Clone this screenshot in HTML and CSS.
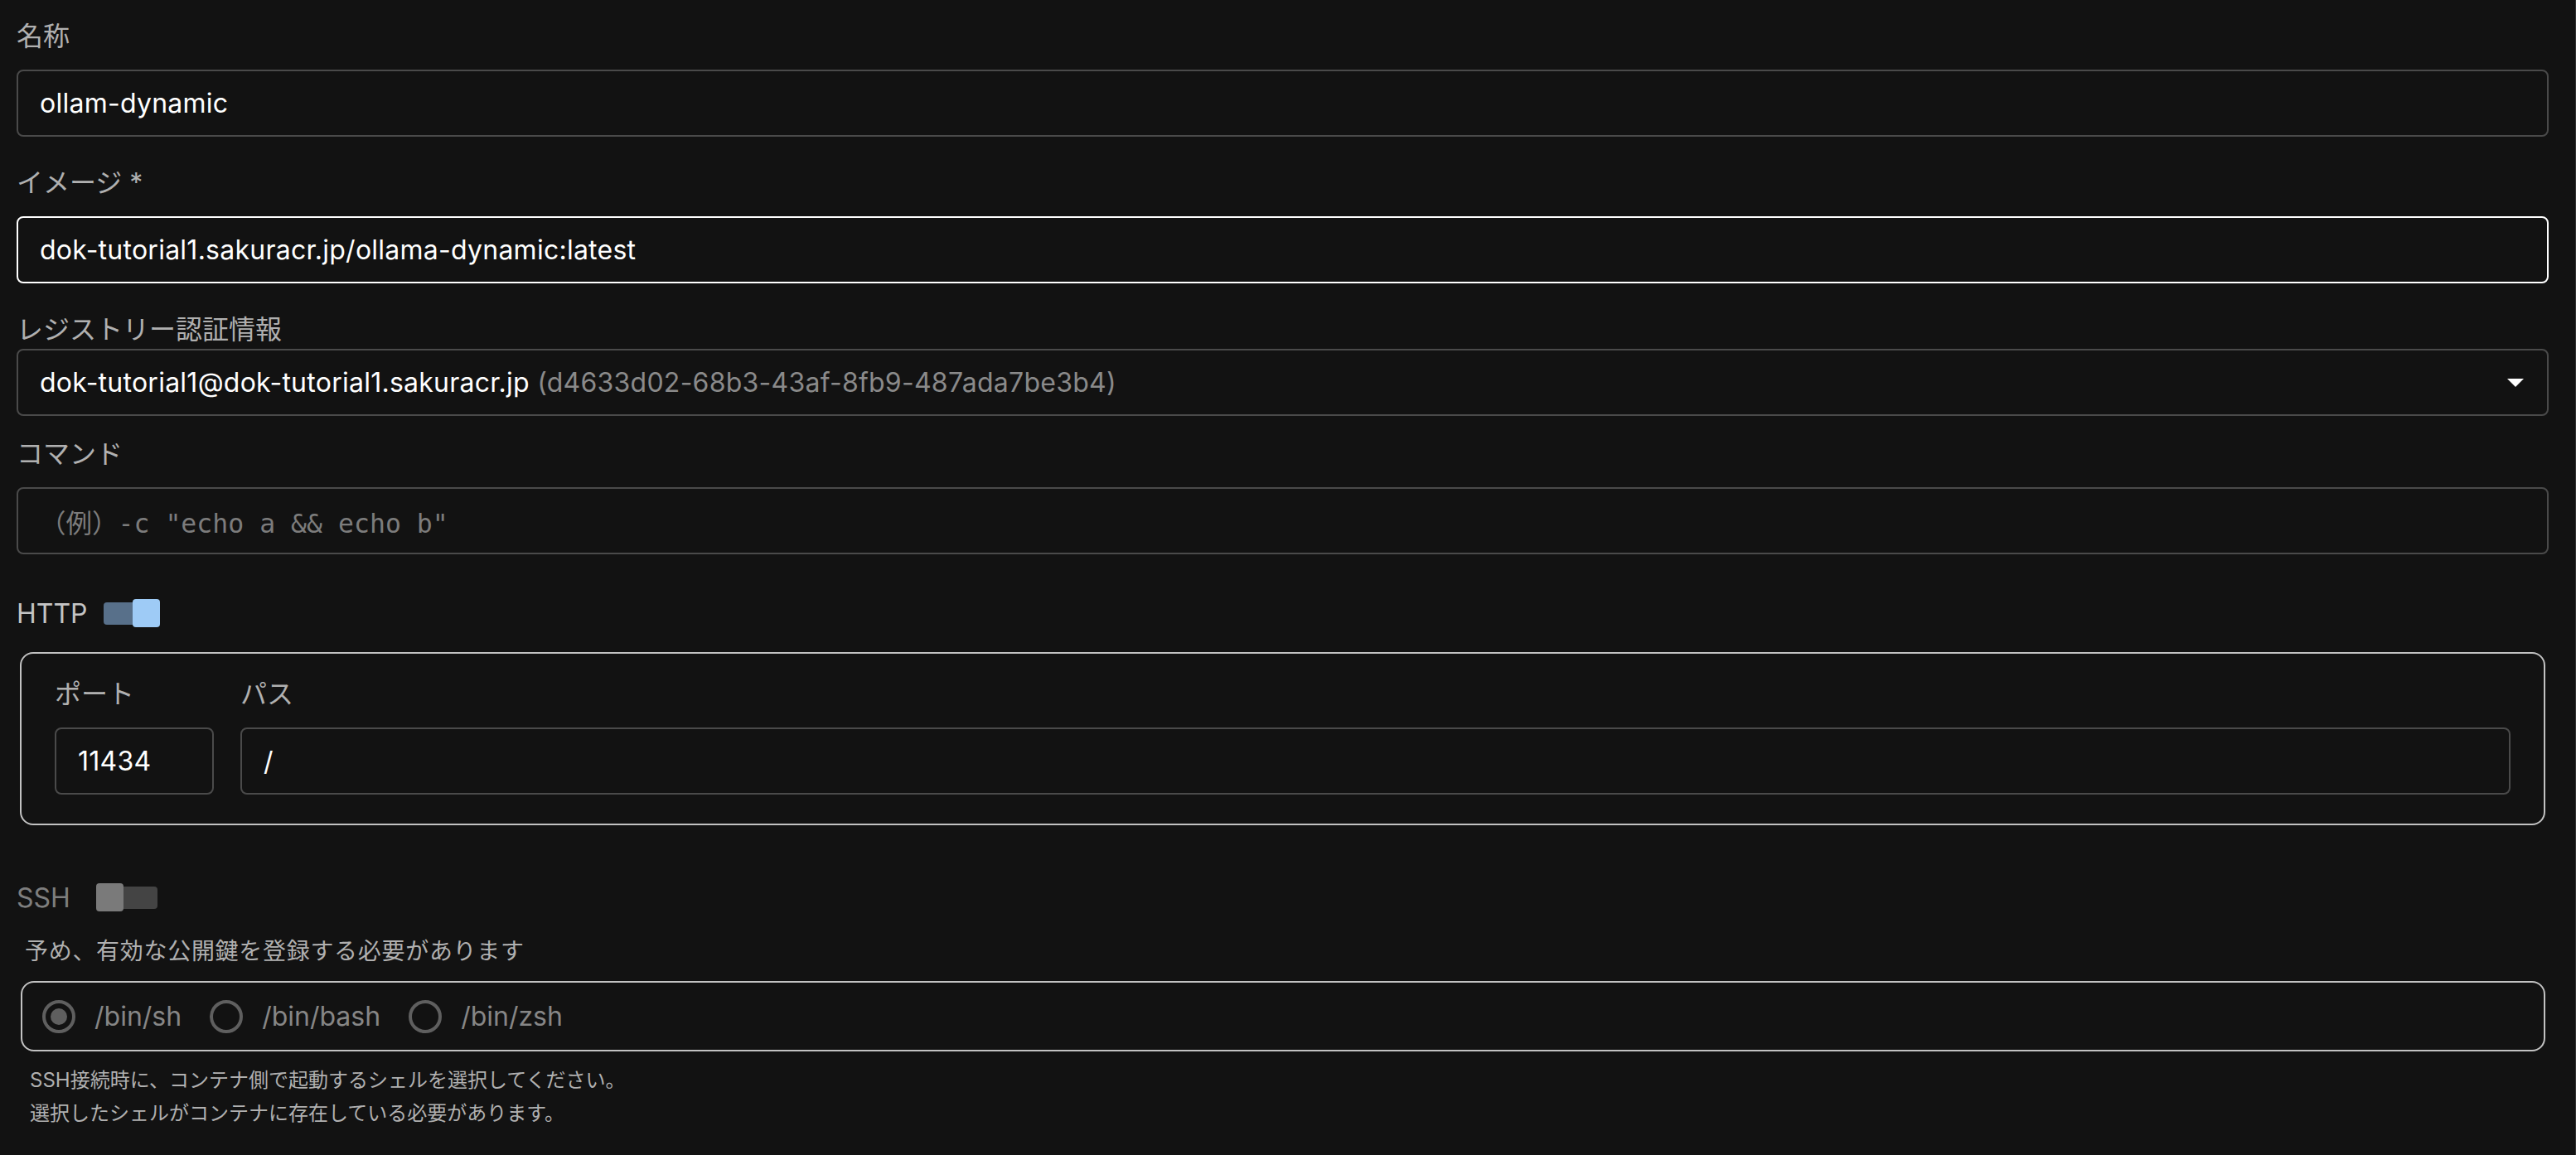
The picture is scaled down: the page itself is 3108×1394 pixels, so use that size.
FILE: index.html
```html
<!DOCTYPE html>
<html lang="ja">
<head>
<meta charset="utf-8">
<title>Form</title>
<link rel="stylesheet" href="styles.css">
</head>
<body>
<div class="page">
  <div class="field">
    <label class="field-label">名称</label>
    <div class="input"><span class="value">ollam-dynamic</span></div>
  </div>
  <div class="field">
    <label class="field-label">イメージ *</label>
    <div class="input input--hover"><span class="value">dok-tutorial1.sakuracr.jp/ollama-dynamic:latest</span></div>
  </div>
  <div class="field field--select">
    <label class="field-label">レジストリー認証情報</label>
    <div class="input select">
      <span class="value">dok-tutorial1@dok-tutorial1.sakuracr.jp <span class="muted">(d4633d02-68b3-43af-8fb9-487ada7be3b4)</span></span>
      <svg class="caret" viewBox="0 0 20 10" width="20" height="10"><path d="M0 0L10 10L20 0Z" fill="#fff"/></svg>
    </div>
  </div>
  <div class="field">
    <label class="field-label">コマンド</label>
    <div class="input"><span class="placeholder">（例）-c "echo a &amp;&amp; echo b"</span></div>
  </div>

  <div class="toggle-row">
    <span class="toggle-label">HTTP</span>
    <span class="switch switch--on"><span class="switch-track"></span><span class="switch-thumb"></span></span>
  </div>
  <div class="group http-group">
    <div class="sub-field port-field">
      <label class="field-label">ポート</label>
      <div class="input"><span class="value">11434</span></div>
    </div>
    <div class="sub-field path-field">
      <label class="field-label">パス</label>
      <div class="input"><span class="value">/</span></div>
    </div>
  </div>

  <div class="toggle-row toggle-row--ssh">
    <span class="toggle-label toggle-label--disabled">SSH</span>
    <span class="switch switch--off"><span class="switch-track"></span><span class="switch-thumb"></span></span>
  </div>
  <p class="note">予め、有効な公開鍵を登録する必要があります</p>
  <div class="group radio-group">
    <div class="radio"><span class="radio-icon radio-icon--checked"></span><span class="radio-label">/bin/sh</span></div>
    <div class="radio"><span class="radio-icon"></span><span class="radio-label">/bin/bash</span></div>
    <div class="radio"><span class="radio-icon"></span><span class="radio-label">/bin/zsh</span></div>
  </div>
  <p class="help">SSH接続時に、コンテナ側で起動するシェルを選択してください。<br>選択したシェルがコンテナに存在している必要があります。</p>
</div>
</body>
</html>
```

FILE: styles.css
```css
html, body {
  margin: 0;
  padding: 0;
  background: #121212;
}
body {
  font-family: Inter, "Noto Sans CJK JP", sans-serif;
  color: #fff;
}
.page {
  box-sizing: border-box;
  width: 3108px;
  min-height: 100vh;
  padding: 21px 32px 0 20px;
  border-right: 1px solid #333;
}
.field {
  margin-bottom: 33px;
}
.field-label {
  display: block;
  font-size: 32px;
  line-height: 46px;
  color: #b0b0b0;
  margin-bottom: 17px;
}
.field--select {
  margin-bottom: 23px;
}
.field--select .field-label {
  margin-bottom: 0;
}
.input {
  box-sizing: border-box;
  height: 81px;
  border: 2px solid #4a4a4a;
  border-radius: 8px;
  display: flex;
  align-items: center;
  padding: 0 26px;
  font-size: 32px;
  letter-spacing: 0.25px;
  white-space: nowrap;
}
.input--hover {
  border-color: #fff;
}
.select {
  justify-content: space-between;
}
.select .caret {
  margin-right: 2px;
}
.muted {
  color: #8a8a8a;
}
.placeholder {
  font-family: "DejaVu Sans Mono", "Noto Sans CJK JP", monospace;
  font-size: 31.5px;
  letter-spacing: 0;
  color: #7c7c7c;
}
.toggle-row {
  display: flex;
  align-items: center;
  height: 46px;
  margin: 48px 0 24px;
}
.toggle-label {
  font-size: 32px;
  color: #c4c4c4;
  margin-right: 19px;
}
.toggle-label--disabled {
  color: #7e7e7e;
}
.toggle-row--ssh {
  margin-top: 64px;
  margin-bottom: 22px;
}
.toggle-row--ssh .toggle-label {
  margin-right: 31px;
}
.switch {
  position: relative;
  width: 68px;
  height: 34px;
}
.switch--off {
  width: 74px;
}
.switch-track {
  position: absolute;
  left: 0;
  right: 0;
  top: 4px;
  bottom: 3px;
  border-radius: 4px;
}
.switch-thumb {
  position: absolute;
  top: 0;
  width: 33px;
  height: 34px;
  border-radius: 4px;
}
.switch--on .switch-track {
  background: #58708a;
}
.switch--on .switch-thumb {
  right: 0;
  background: #9ecbf6;
}
.switch--off .switch-track {
  background: #444;
}
.switch--off .switch-thumb {
  left: 0;
  background: #7a7a7a;
}
.group {
  margin: 0 4px;
  border: 2px solid #c2c2c2;
  border-radius: 16px;
}
.http-group {
  display: flex;
  gap: 32px;
  padding: 26px 40px 35px;
}
.port-field {
  width: 192px;
}
.path-field {
  flex: 1;
}
.note {
  margin: 0 0 16px 10px;
  font-size: 28px;
  line-height: 40px;
  letter-spacing: 0.7px;
  color: #b0b0b0;
}
.radio-group {
  box-sizing: border-box;
  height: 85px;
  display: flex;
  align-items: center;
  padding-left: 24px;
  margin-left: 5px;
}
.radio {
  display: flex;
  align-items: center;
  margin-right: 34px;
}
.radio-icon {
  box-sizing: border-box;
  width: 40px;
  height: 40px;
  border: 4px solid #5f5f5f;
  border-radius: 50%;
  margin-right: 23px;
  display: flex;
  align-items: center;
  justify-content: center;
}
.radio-icon--checked::after {
  content: "";
  width: 20px;
  height: 20px;
  border-radius: 50%;
  background: #5f5f5f;
}
.radio-label {
  font-size: 32px;
  color: #868686;
}
.help {
  margin: 15px 0 0 16px;
  font-size: 24px;
  line-height: 40px;
  color: #b0b0b0;
}
```
